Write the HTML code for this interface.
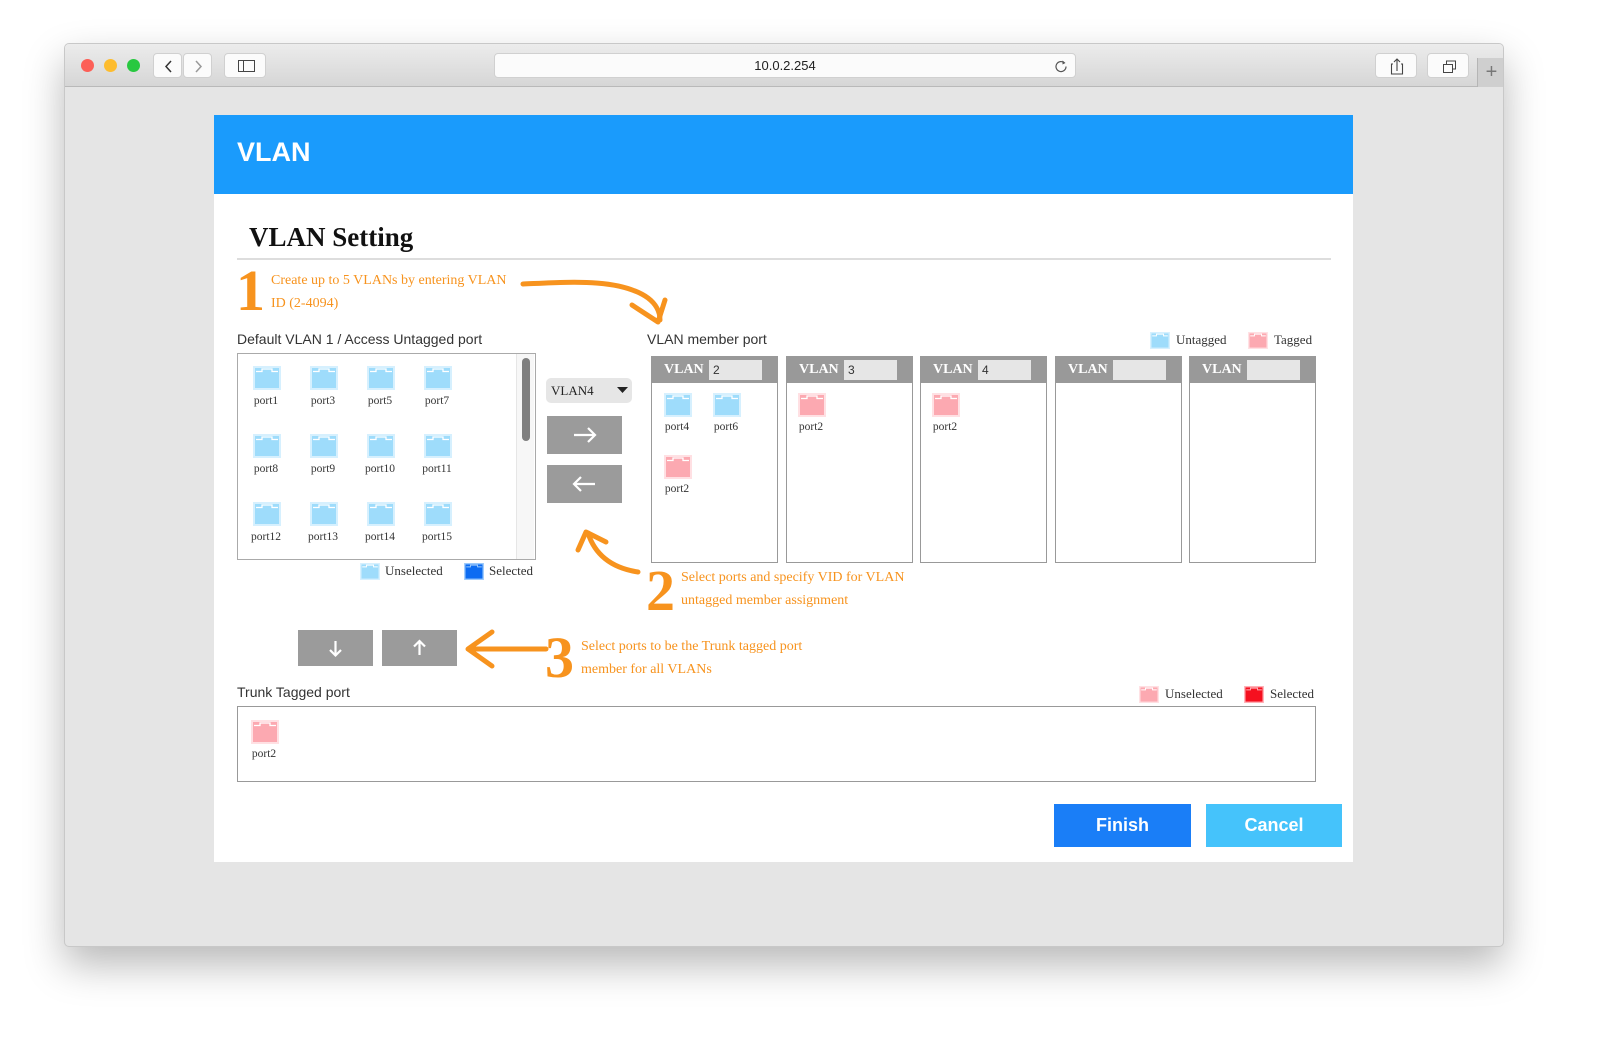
<!DOCTYPE html>
<html><head><meta charset="utf-8"><style>
*{margin:0;padding:0;box-sizing:border-box}
body{width:1600px;height:1053px;background:#fff;position:relative;overflow:hidden;font-family:"Liberation Sans",sans-serif}
.a{position:absolute}
.serif{font-family:"Liberation Serif",serif}
.win{left:64px;top:43px;width:1440px;height:904px;background:#e5e5e5;border:1px solid #c8c8c8;border-radius:5px;box-shadow:0 18px 40px rgba(0,0,0,.28);overflow:hidden}
.bar{left:0;top:0;width:1440px;height:43px;background:linear-gradient(#ececec,#d6d6d6);border-bottom:1px solid #b9b9b9}
.tb{background:#fbfbfb;border-radius:4px;border:1px solid #d0d0d0;height:25px;top:9px}
.lbl{font-size:11.5px;color:#333;font-family:"Liberation Serif",serif;text-align:center;width:40px}
.or{color:#f7931e;font-family:"Liberation Serif",serif;font-size:14px;line-height:23px}
.num{font-family:"Liberation Serif",serif;font-weight:bold;font-size:58px;color:#f7931e;line-height:66px}
.gbtn{background:#9b9b9b}
.vb{border:1px solid #999;background:#fff;width:127px;height:207px;top:356px}
.vh{height:26px;background:#999;color:#fff;font-family:"Liberation Serif",serif;font-weight:bold;font-size:14px;padding:5px 0 0 12px;position:relative}
.vi{position:absolute;left:57px;top:3px;width:53px;height:20px;background:#e6e6e6;color:#333;font-weight:normal;font-family:"Liberation Sans",sans-serif;font-size:12px;padding:3px 4px}
</style></head><body>
<svg width="0" height="0" style="position:absolute"><defs>
<symbol id="pb" viewBox="0 0 28 24"><rect width="28" height="24" fill="#d6f0fe"/><rect x="2" y="2" width="24" height="20" fill="#9edcfb"/><path d="M3 5.5h6v-2.5h10v2.5h6" fill="none" stroke="#fff" stroke-width="1.3"/></symbol>
<symbol id="pr" viewBox="0 0 28 24"><rect width="28" height="24" fill="#ffe0e3"/><rect x="2" y="2" width="24" height="20" fill="#fca9b1"/><path d="M3 5.5h6v-2.5h10v2.5h6" fill="none" stroke="#fff" stroke-width="1.3"/></symbol>
<symbol id="pd" viewBox="0 0 28 24"><rect width="28" height="24" fill="#9ccafc"/><rect x="2" y="2" width="24" height="20" fill="#0c6cf2"/><path d="M3 5.5h6v-2.5h10v2.5h6" fill="none" stroke="#9ccafc" stroke-width="1.3"/></symbol>
<symbol id="pR" viewBox="0 0 28 24"><rect width="28" height="24" fill="#ffb0b6"/><rect x="2" y="2" width="24" height="20" fill="#f5101f"/><path d="M3 5.5h6v-2.5h10v2.5h6" fill="none" stroke="#ffb0b6" stroke-width="1.3"/></symbol>
</defs></svg>
<div class="a win">
 <div class="a bar">
  <div class="a" style="left:16px;top:15px;width:13px;height:13px;border-radius:50%;background:#fc5f57"></div>
  <div class="a" style="left:39px;top:15px;width:13px;height:13px;border-radius:50%;background:#fdbc2e"></div>
  <div class="a" style="left:62px;top:15px;width:13px;height:13px;border-radius:50%;background:#28c840"></div>
  <div class="a tb" style="left:88px;width:29px"><svg width="29" height="25"><path d="M17 7l-5 5.5 5 5.5" fill="none" stroke="#333" stroke-width="1.5"/></svg></div>
  <div class="a tb" style="left:118px;width:29px"><svg width="29" height="25"><path d="M12 7l5 5.5-5 5.5" fill="none" stroke="#999" stroke-width="1.5"/></svg></div>
  <div class="a tb" style="left:159px;width:42px"><svg width="42" height="25"><rect x="13.5" y="6.5" width="16" height="11" fill="none" stroke="#444"/><line x1="18.5" y1="7" x2="18.5" y2="17" stroke="#444"/></svg></div>
  <div class="a tb" style="left:429px;width:582px;font-size:13px;color:#222;text-align:center;line-height:24px">10.0.2.254<svg class="a" style="right:6px;top:4px" width="16" height="16"><path d="M11.5 5a5 5 0 1 0 1.5 3.5" fill="none" stroke="#555" stroke-width="1.2"/><path d="M9.5 2.5l3 2.5-3 1.5z" fill="#555"/></svg></div>
  <div class="a tb" style="left:1310px;width:42px"><svg width="42" height="25"><path d="M17 10h-1.5v10h11v-10h-1.5M21 17v-12M18 8l3-3 3 3" fill="none" stroke="#444" stroke-width="1.1"/></svg></div>
  <div class="a tb" style="left:1362px;width:42px"><svg width="42" height="25"><rect x="15.5" y="10.5" width="9" height="8" fill="none" stroke="#444"/><path d="M18.5 10v-3h9v8h-3" fill="none" stroke="#444"/></svg></div>
  <div class="a" style="left:1412px;top:14px;width:28px;height:29px;background:#cfcfcf;border-left:1px solid #b5b5b5;color:#777;font-size:20px;text-align:center;line-height:28px">+</div>
 </div>
</div>
<div class="a" style="left:214px;top:115px;width:1139px;height:747px;background:#fff"></div>
<div class="a" style="left:214px;top:115px;width:1139px;height:79px;background:#1a9bfc;color:#fff;font-weight:bold;font-size:27px;padding:22px 0 0 23px">VLAN</div>
<div class="a serif" style="left:249px;top:222px;font-size:27px;font-weight:bold;color:#111">VLAN Setting</div>
<div class="a" style="left:237px;top:258px;width:1094px;height:2px;background:#ddd"></div>
<div class="a num" style="left:236px;top:258px">1</div>
<div class="a or" style="left:271px;top:269px">Create up to 5 VLANs by entering VLAN<br>ID (2-4094)</div>
<div class="a" style="left:237px;top:331px;font-size:14px;color:#333">Default VLAN 1 / Access Untagged port</div>
<div class="a" style="left:237px;top:353px;width:299px;height:207px;border:1px solid #aaa;background:#fff"></div>
<div class="a" style="left:516px;top:354px;width:18px;height:205px;background:#f7f7f7;border-left:1px solid #e6e6e6"></div>
<div class="a" style="left:522px;top:358px;width:8px;height:83px;background:#7f7f7f;border-radius:4px"></div>
<div class="a" style="left:647px;top:331px;font-size:14px;color:#333">VLAN member port</div>
<div class="a" style="left:237px;top:684px;font-size:14px;color:#333">Trunk Tagged port</div>
<div class="a" style="left:237px;top:706px;width:1079px;height:76px;border:1px solid #999;background:#fff"></div>
<div class="a serif" style="left:546px;top:378px;width:86px;height:25px;background:#e6e6e6;border-radius:5px;font-size:13px;padding:5px 0 0 5px;color:#222">VLAN4<svg class="a" style="right:4px;top:9px" width="11" height="7"><path d="M0 0h11l-5.5 6z" fill="#222"/></svg></div>
<div class="a gbtn" style="left:547px;top:416px;width:75px;height:38px"><svg width="75" height="38"><path d="M27 19h21M41 12l7 7-7 7" fill="none" stroke="#fff" stroke-width="2.2"/></svg></div>
<div class="a gbtn" style="left:547px;top:465px;width:75px;height:38px"><svg width="75" height="38"><path d="M48 19h-21M34 12l-7 7 7 7" fill="none" stroke="#fff" stroke-width="2.2"/></svg></div>
<div class="a gbtn" style="left:298px;top:630px;width:75px;height:36px"><svg width="75" height="36"><path d="M37.5 11v14M32 20l5.5 5.5 5.5-5.5" fill="none" stroke="#fff" stroke-width="2.2"/></svg></div>
<div class="a gbtn" style="left:382px;top:630px;width:75px;height:36px"><svg width="75" height="36"><path d="M37.5 25v-14M32 16.5l5.5-5.5 5.5 5.5" fill="none" stroke="#fff" stroke-width="2.2"/></svg></div>
<div class="a vb" style="left:651px"><div class="vh">VLAN<div class="vi">2</div></div></div>
<div class="a vb" style="left:786px"><div class="vh">VLAN<div class="vi">3</div></div></div>
<div class="a vb" style="left:920px"><div class="vh">VLAN<div class="vi">4</div></div></div>
<div class="a vb" style="left:1055px"><div class="vh">VLAN<div class="vi"></div></div></div>
<div class="a vb" style="left:1189px"><div class="vh">VLAN<div class="vi"></div></div></div>
<svg class="a" style="left:253px;top:366px" width="28" height="24"><use href="#pb"/></svg><div class="a lbl" style="left:246px;top:395px">port1</div>
<svg class="a" style="left:310px;top:366px" width="28" height="24"><use href="#pb"/></svg><div class="a lbl" style="left:303px;top:395px">port3</div>
<svg class="a" style="left:367px;top:366px" width="28" height="24"><use href="#pb"/></svg><div class="a lbl" style="left:360px;top:395px">port5</div>
<svg class="a" style="left:424px;top:366px" width="28" height="24"><use href="#pb"/></svg><div class="a lbl" style="left:417px;top:395px">port7</div>
<svg class="a" style="left:253px;top:434px" width="28" height="24"><use href="#pb"/></svg><div class="a lbl" style="left:246px;top:463px">port8</div>
<svg class="a" style="left:310px;top:434px" width="28" height="24"><use href="#pb"/></svg><div class="a lbl" style="left:303px;top:463px">port9</div>
<svg class="a" style="left:367px;top:434px" width="28" height="24"><use href="#pb"/></svg><div class="a lbl" style="left:360px;top:463px">port10</div>
<svg class="a" style="left:424px;top:434px" width="28" height="24"><use href="#pb"/></svg><div class="a lbl" style="left:417px;top:463px">port11</div>
<svg class="a" style="left:253px;top:502px" width="28" height="24"><use href="#pb"/></svg><div class="a lbl" style="left:246px;top:531px">port12</div>
<svg class="a" style="left:310px;top:502px" width="28" height="24"><use href="#pb"/></svg><div class="a lbl" style="left:303px;top:531px">port13</div>
<svg class="a" style="left:367px;top:502px" width="28" height="24"><use href="#pb"/></svg><div class="a lbl" style="left:360px;top:531px">port14</div>
<svg class="a" style="left:424px;top:502px" width="28" height="24"><use href="#pb"/></svg><div class="a lbl" style="left:417px;top:531px">port15</div>
<svg class="a" style="left:360px;top:563px" width="20" height="17"><use href="#pb"/></svg><div class="a serif" style="left:385px;top:563px;font-size:13px;color:#333">Unselected</div>
<svg class="a" style="left:464px;top:563px" width="20" height="17"><use href="#pd"/></svg><div class="a serif" style="left:489px;top:563px;font-size:13px;color:#333">Selected</div>
<svg class="a" style="left:1150px;top:332px" width="20" height="17"><use href="#pb"/></svg><div class="a serif" style="left:1176px;top:332px;font-size:13px;color:#333">Untagged</div>
<svg class="a" style="left:1248px;top:332px" width="20" height="17"><use href="#pr"/></svg><div class="a serif" style="left:1274px;top:332px;font-size:13px;color:#333">Tagged</div>
<svg class="a" style="left:1139px;top:686px" width="20" height="17"><use href="#pr"/></svg><div class="a serif" style="left:1165px;top:686px;font-size:13px;color:#333">Unselected</div>
<svg class="a" style="left:1244px;top:686px" width="20" height="17"><use href="#pR"/></svg><div class="a serif" style="left:1270px;top:686px;font-size:13px;color:#333">Selected</div>
<svg class="a" style="left:664px;top:393px" width="28" height="24"><use href="#pb"/></svg><div class="a lbl" style="left:657px;top:421px">port4</div>
<svg class="a" style="left:713px;top:393px" width="28" height="24"><use href="#pb"/></svg><div class="a lbl" style="left:706px;top:421px">port6</div>
<svg class="a" style="left:664px;top:455px" width="28" height="24"><use href="#pr"/></svg><div class="a lbl" style="left:657px;top:483px">port2</div>
<svg class="a" style="left:798px;top:393px" width="28" height="24"><use href="#pr"/></svg><div class="a lbl" style="left:791px;top:421px">port2</div>
<svg class="a" style="left:932px;top:393px" width="28" height="24"><use href="#pr"/></svg><div class="a lbl" style="left:925px;top:421px">port2</div>
<svg class="a" style="left:251px;top:720px" width="28" height="24"><use href="#pr"/></svg><div class="a lbl" style="left:244px;top:748px">port2</div>
<svg class="a" style="left:0;top:0" width="1600" height="1053">
<g fill="none" stroke="#f7931e" stroke-width="5" stroke-linecap="round" stroke-linejoin="round">
<path d="M523 284 C570 282 620 278 648 298 C656 304 660 312 660 320"/>
<path d="M632 305 L658 322 L665 300"/>
<path d="M638 572 C612 568 595 555 588 533"/>
<path d="M578 550 L586 532 L606 542"/>
<path d="M546 649 L470 649"/>
<path d="M492 632 L468 649 L492 666"/>
</g></svg>
<div class="a num" style="left:646px;top:558px">2</div>
<div class="a or" style="left:681px;top:566px">Select ports and specify VID for VLAN<br>untagged member assignment</div>
<div class="a num" style="left:545px;top:625px">3</div>
<div class="a or" style="left:581px;top:635px">Select ports to be the Trunk tagged port<br>member for all VLANs</div>
<div class="a" style="left:1054px;top:804px;width:137px;height:43px;background:#1a7ef7;color:#fff;font-weight:bold;font-size:18px;text-align:center;line-height:43px">Finish</div>
<div class="a" style="left:1206px;top:804px;width:136px;height:43px;background:#45c3fb;color:#fff;font-weight:bold;font-size:18px;text-align:center;line-height:43px">Cancel</div>
</body></html>
